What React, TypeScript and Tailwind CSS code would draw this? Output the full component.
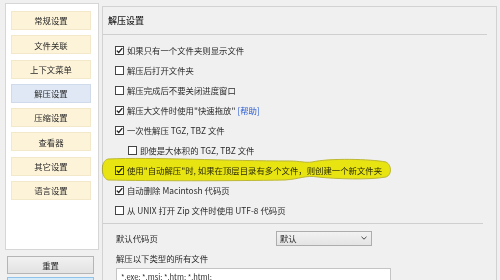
import React from 'react';

const FONT = '"Noto Sans CJK SC", "Noto Sans", sans-serif';

const navItems = ['常规设置', '文件关联', '上下文菜单', '解压设置', '压缩设置', '查看器', '其它设置', '语言设置'];

function CheckBox({ checked }: { checked: boolean }) {
  return (
    <span className="w-[9px] h-[9px] border border-[#444] bg-white flex items-center justify-center shrink-0">
      {checked && (
        <svg width="7" height="7" viewBox="0 0 7 7">
          <path d="M0.8 3.6 L2.7 5.5 L6.3 1.2" fill="none" stroke="#222" strokeWidth="1.3" />
        </svg>
      )}
    </span>
  );
}

function Row({ checked, indent, children }: { checked: boolean; indent?: boolean; children: React.ReactNode }) {
  return (
    <div className={`h-[20px] shrink-0 flex items-center gap-[3px] ${indent ? 'pl-[13px]' : ''}`}>
      <CheckBox checked={checked} />
      <span className="relative whitespace-nowrap">{children}</span>
    </div>
  );
}

export default function App() {
  return (
    <div
      className="relative w-[500px] h-[280px] bg-[#f0f0f0] overflow-hidden flex items-start text-[8.4px] text-[#2a2a2a] leading-none"
      style={{ fontFamily: FONT }}
    >
      {/* sidebar */}
      <div className="w-[97px] pl-[5px] pt-[3px] shrink-0 flex flex-col">
        <div className="w-[94px] h-[247px] shrink-0 bg-white border border-[#d6d6d6] pt-[7px] pl-[5px] flex flex-col gap-[5.3px]">
          {navItems.map((item) => (
            <div
              key={item}
              className={`w-[80px] h-[19px] shrink-0 flex items-center justify-center border ${
                item === '解压设置' ? 'bg-[#dfe8f4] border-[#cfdbeb]' : 'bg-[#fdf3d8] border-[#f3e8c9]'
              }`}
            >
              {item}
            </div>
          ))}
        </div>
        <div className="mt-[6px] ml-[2px] w-[87px] h-[18px] shrink-0 border border-[#b5b5b5] bg-gradient-to-b from-[#f1f1f1] to-[#e2e2e2] flex items-center justify-center">
          重置
        </div>
        <div className="mt-[3px] ml-[2px] w-[87px] h-[18px] shrink-0 border border-[#8fc3ea] bg-[#d4eaf9]" />
      </div>

      {/* main group */}
      <div className="ml-[5px] mt-[6px] w-[395px] h-[320px] shrink-0 border border-[#d2d2d2] flex flex-col">
        <div className="h-[27px] shrink-0 pl-[5px] flex items-center text-[9px] font-medium text-[#222]">解压设置</div>
        <div className="h-px shrink-0 bg-[#cfcfcf] mr-[9px]" />
        <div className="pl-[12px] pt-[5px] shrink-0 flex flex-col">
          <Row checked>如果只有一个文件夹则显示文件</Row>
          <Row checked={false}>解压后打开文件夹</Row>
          <Row checked={false}>解压完成后不要关闭进度窗口</Row>
          <Row checked>
            解压大文件时使用"快速拖放" <span className="text-[#2a5bd0]">[帮助]</span>
          </Row>
          <Row checked>一次性解压 TGZ, TBZ 文件</Row>
          <Row checked={false} indent>
            即使是大体积的 TGZ, TBZ 文件
          </Row>
          <Row checked>使用"自动解压"时, 如果在顶层目录有多个文件，则创建一个新文件夹</Row>
          <Row checked>自动删除 Macintosh 代码页</Row>
          <Row checked={false}>从 UNIX 打开 Zip 文件时使用 UTF-8 代码页</Row>
        </div>
        <div className="h-px shrink-0 bg-[#cfcfcf] mt-[3px] mr-[13px]" />
        <div className="pl-[13px] pr-[13px] mt-[6px] h-[16px] shrink-0 flex items-center justify-between">
          <span>默认代码页</span>
          <div className="w-[96px] h-[15px] mr-[111px] border border-[#adadad] bg-gradient-to-b from-[#f2f2f2] to-[#e4e4e4] flex items-center justify-between pl-[3px] pr-[4px]">
            <span>默认</span>
            <svg width="6" height="4" viewBox="0 0 6 4">
              <path d="M0.5 0.8 L3 3.2 L5.5 0.8" fill="none" stroke="#444" strokeWidth="1" />
            </svg>
          </div>
        </div>
        <div className="pl-[13px] mt-[5px] h-[14px] shrink-0 flex items-center">解压以下类型的所有文件</div>
        <div className="ml-[13px] mt-[3px] w-[275px] h-[40px] shrink-0 bg-white border border-[#c4c4c4] pl-[4px] pt-[4px] text-[7.5px]">
          *.exe; *.msi; *.htm; *.html;
        </div>
      </div>

      {/* yellow highlight annotation over row 7 */}
      <svg className="absolute left-0 top-0 pointer-events-none" width="500" height="280" viewBox="0 0 500 280" style={{ mixBlendMode: 'multiply' }}>
        <path
          d="M108 159 C150 157 230 161 290 161 C300 161 305 163 312 162 C330 158 370 159 386 162 C392 165 392 175 386 177 C370 180 335 179 318 177 C305 175 300 179 285 180 C230 181 150 181 108 180 C101 178 100 161 108 159 Z"
          fill="#f6f312"
          stroke="#c9c338"
          strokeWidth="1"
        />
      </svg>
    </div>
  );
}
